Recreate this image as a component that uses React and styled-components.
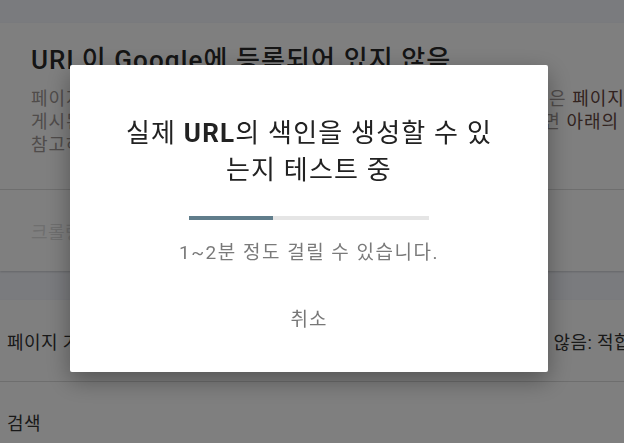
import React from "react";
import styled, { createGlobalStyle } from "styled-components";

const GlobalStyle = createGlobalStyle`
  body {
    margin: 0;
    font-family: Roboto, "Noto Sans CJK KR", sans-serif;
    background: #f5f7fd;
  }
`;

const Page = styled.div`
  width: 624px;
  height: 443px;
  overflow: hidden;
  background: #f5f7fd;
  padding-top: 23px;
  box-sizing: border-box;
`;

const Card = styled.section`
  background: #fff;
  box-shadow: 0 1px 2px rgba(0, 0, 0, 0.18);
  margin-bottom: ${(p) => p.gap || 0}px;
`;

const Head = styled.div`
  padding: 20px 0 0 31px;
  height: 166px;
  box-sizing: border-box;
`;

const Title = styled.h2`
  margin: 0 0 10px;
  font-size: 26px;
  font-weight: 500;
  line-height: 34px;
  letter-spacing: 1.1px;
  color: #2a2a2a;
  white-space: nowrap;
`;

const Desc = styled.div`
  font-size: 18px;
  line-height: 23px;
  letter-spacing: 1px;
  color: #a09896;
  white-space: nowrap;
`;

const Mark = styled.span`
  color: #64463f;
`;

const Row = styled.div`
  display: flex;
  justify-content: space-between;
  align-items: center;
  height: ${(p) => p.h || 80}px;
  padding-left: ${(p) => p.indent || 7}px;
  border-top: ${(p) => (p.first ? "none" : "1px solid #dcdcdc")};
  font-size: 18px;
  letter-spacing: 0.4px;
  color: ${(p) => (p.muted ? "#dedede" : "#333")};
  white-space: nowrap;
  overflow: hidden;
`;

const Tail = styled.span`
  margin-right: -7px;
`;

const Scrim = styled.div`
  position: fixed;
  inset: 0;
  background: rgba(0, 0, 0, 0.5);
  display: flex;
  justify-content: center;
  align-items: flex-start;
  padding: 65px 6px 0 0;
`;

const Dialog = styled.div`
  width: 478px;
  height: 307px;
  box-sizing: border-box;
  background: #fff;
  border-radius: 2px;
  box-shadow: 0 8px 24px rgba(0, 0, 0, 0.35);
  padding-top: 50px;
  display: flex;
  flex-direction: column;
  align-items: center;
  text-align: center;
`;

const DialogTitle = styled.h1`
  margin: 0;
  font-size: 26px;
  font-weight: 400;
  line-height: 37px;
  color: #222;
  letter-spacing: 1.2px;

  b {
    font-weight: 700;
  }
`;

const Track = styled.div`
  width: 240px;
  height: 4px;
  margin-top: 27px;
  background: #e5e5e5;
`;

const Fill = styled.div`
  height: 100%;
  background: #607d8b;
`;

const Note = styled.p`
  margin: 21px 0 0;
  font-size: 19px;
  line-height: 24px;
  letter-spacing: 1.5px;
  color: #7a7a7a;
`;

const CancelButton = styled.button`
  margin-top: 34px;
  height: 36px;
  padding: 0 16px;
  border: none;
  background: none;
  font-family: inherit;
  font-size: 19px;
  letter-spacing: 1px;
  color: #777;
  cursor: pointer;
`;

export default function App() {
  const progress = 35;

  return (
    <>
      <GlobalStyle />
      <Page>
        <Card gap={29}>
          <Head>
            <Title>URL이 Google에 등록되어 있지 않음</Title>
            <Desc>
              페이지가 색인되지 않았습니다. 요청하신 주소는 현재 색인되지 않은 <Mark>페이지</Mark>
            </Desc>
            <Desc>
              게시된 페이지인지 확인하고 색인 생성을 요청하려는 경우 수정하면 <Mark>아래의</Mark> 내용을
            </Desc>
            <Desc>참고하세요.</Desc>
          </Head>
          <Row h={81} indent={31} muted>
            크롤링 허용 여부: 예
          </Row>
        </Card>
        <Card>
          <Row h={81} first>
            <span>페이지 가져오기: 성공</span>
            <Tail>등록되지 않음: 적합</Tail>
          </Row>
          <Row h={80}>검색</Row>
        </Card>
      </Page>
      <Scrim>
        <Dialog>
          <DialogTitle>
            실제 <b>URL</b>의 색인을 생성할 수 있
            <br />
            는지 테스트 중
          </DialogTitle>
          <Track>
            <Fill style={{ width: `${progress}%` }} />
          </Track>
          <Note>1~2분 정도 걸릴 수 있습니다.</Note>
          <CancelButton type="button">취소</CancelButton>
        </Dialog>
      </Scrim>
    </>
  );
}
